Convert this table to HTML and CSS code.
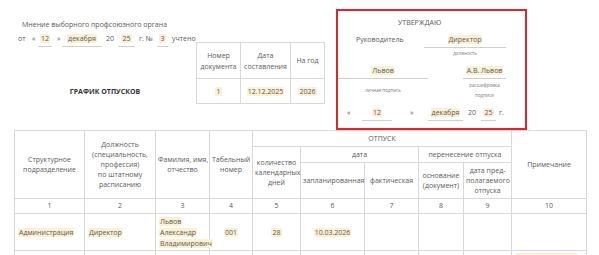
FILE: index.html
```html
<!DOCTYPE html>
<html lang="ru">
<head>
<meta charset="utf-8">
<title>График отпусков</title>
<link rel="stylesheet" href="styles.css">
</head>
<body>
<div class="page">
  <header class="head">
    <div class="head-left">
      <div class="col-main">
        <div class="opinion">
          <div class="opinion-title">Мнение выборного профсоюзного органа</div>
          <div class="date-line">
            <span class="t-ot">от</span>
            <span class="t-lq">«</span>
            <span class="field f-day"><mark>12</mark></span>
            <span class="t-rq">»</span>
            <span class="field f-month"><mark>декабря</mark></span>
            <span class="t-20">20</span>
            <span class="field f-year"><mark>25</mark></span>
            <span class="t-no">г. №</span>
            <span class="field f-num"><mark>3</mark></span>
            <span class="t-done">учтено</span>
          </div>
        </div>
        <div class="doc-title">ГРАФИК ОТПУСКОВ</div>
      </div>
      <table class="doc-table">
        <colgroup><col class="dc1"><col class="dc2"><col class="dc3"></colgroup>
        <tr class="dt-head"><td>Номер<br>документа</td><td>Дата<br>составления</td><td>На год</td></tr>
        <tr class="dt-val"><td><mark>1</mark></td><td><mark>12.12.2025</mark></td><td><mark>2026</mark></td></tr>
      </table>
    </div>
    <div class="approve">
      <div class="approve-title">УТВЕРЖДАЮ</div>
      <div class="ap-row ap-row-b">
        <span class="ap-label">Руководитель</span>
        <span class="field ap-pos"><mark>Директор</mark></span>
      </div>
      <div class="ap-cap-b"><span class="cap ap-pos-cap">должность</span></div>
      <div class="ap-row ap-row-c">
        <span class="field ap-sign"><mark>Львов</mark></span>
        <span class="field ap-name"><mark>А.В. Львов</mark></span>
      </div>
      <div class="ap-cap-c">
        <span class="cap ap-sign-cap">личная подпись</span>
        <span class="cap ap-name-cap">расшифровка<br>подписи</span>
      </div>
      <div class="ap-row ap-date">
        <span class="d-lq">«</span>
        <span class="field d-day"><mark>12</mark></span>
        <span class="d-rq">»</span>
        <span class="field d-month"><mark>декабря</mark></span>
        <span class="d-20">20</span>
        <span class="field d-year"><mark>25</mark></span>
        <span class="d-g">г.</span>
      </div>
    </div>
  </header>

  <table class="schedule">
    <colgroup>
      <col class="c1"><col class="c2"><col class="c3"><col class="c4"><col class="c5">
      <col class="c6"><col class="c7"><col class="c8"><col class="c9"><col class="c10">
    </colgroup>
    <tr class="r1">
      <th rowspan="3">Структурное<br>подразделение</th>
      <th rowspan="3">Должность<br>(специальность,<br>профессия)<br>по штатному<br>расписанию</th>
      <th rowspan="3">Фамилия, имя,<br>отчество</th>
      <th rowspan="3">Табельный<br>номер</th>
      <th colspan="5">ОТПУСК</th>
      <th rowspan="3">Примечание</th>
    </tr>
    <tr class="r2">
      <th rowspan="2">количество<br>календарных<br>дней</th>
      <th colspan="2">дата</th>
      <th colspan="2">перенесение отпуска</th>
    </tr>
    <tr class="r3">
      <th>запланированная</th>
      <th>фактическая</th>
      <th>основание<br>(документ)</th>
      <th>дата пред-<br>полагаемого<br>отпуска</th>
    </tr>
    <tr class="r-num">
      <td>1</td><td>2</td><td>3</td><td>4</td><td>5</td><td>6</td><td>7</td><td>8</td><td>9</td><td>10</td>
    </tr>
    <tr class="r-data">
      <td class="left"><mark>Администрация</mark></td>
      <td class="left"><mark>Директор</mark></td>
      <td class="left"><mark>Львов</mark><br><mark>Александр</mark><br><mark>Владимирович</mark></td>
      <td><mark>001</mark></td>
      <td><mark>28</mark></td>
      <td><mark>10.03.2026</mark></td>
      <td></td><td></td><td></td><td></td>
    </tr>
    <tr class="r-next">
      <td></td><td></td><td></td><td></td><td></td><td></td><td></td><td></td><td></td>
      <td class="top"><span class="hl-block"></span></td>
    </tr>
  </table>
</div>
</body>
</html>
```

FILE: styles.css
```css
* { box-sizing: border-box; }
body {
  margin: 0;
  background: #fff;
  font-family: "Open Sans", "Liberation Sans", sans-serif;
  font-size: 7px;
  color: #5a5a5a;
}
mark {
  background: #fcf0d2;
  color: inherit;
  padding: 0 1px;
  border-radius: 2px;
}
.page { padding: 9px 13px 0 14px; }

/* header */
.head { display: flex; height: 121px; }
.head-left { display: flex; width: 316px; }
.col-main { width: 182px; }
.opinion-title { padding: 11px 0 0 8px; line-height: 10px; white-space: nowrap; }
.date-line { display: flex; margin-top: 2px; line-height: 14px; white-space: nowrap; }
.field { border-bottom: 1px solid #cfcfcf; text-align: center; display: block; }
.t-ot { width: 18px; padding-left: 4px; }
.t-lq { width: 6px; }
.f-day { width: 14px; }
.t-rq { width: 10px; padding-left: 5px; }
.f-month { width: 40px; }
.t-20 { width: 16px; text-align: center; }
.f-year { width: 17px; }
.t-no { width: 22px; text-align: center; }
.f-num { width: 11px; }
.t-done { padding-left: 4px; }
.doc-title {
  margin-top: 40px;
  text-align: center;
  font-weight: bold;
  color: #333;
  line-height: 10px;
}

.doc-table {
  margin-top: 33px;
  width: 128px;
  border-collapse: collapse;
  table-layout: fixed;
  align-self: flex-start;
}
.dc1 { width: 44px; }
.dc2 { width: 50px; }
.dc3 { width: 34px; }
.doc-table td {
  border: 1px solid #d8d8d8;
  text-align: center;
  vertical-align: middle;
  line-height: 11px;
  padding: 0;
  white-space: nowrap;
}
.dt-head { height: 36px; }
.dt-val { height: 25px; }

/* approve box */
.approve {
  width: 191px;
  height: 121px;
  margin-left: 6px;
  border: 2px solid #e3222a;
}
.approve-title { margin-top: 7px; padding-left: 60px; line-height: 10px; }
.ap-row { display: flex; line-height: 14px; white-space: nowrap; }
.ap-row-b { margin-top: 5px; }
.ap-label { width: 86px; padding-left: 18px; }
.ap-pos { width: 82px; }
.cap { font-size: 4.5px; text-align: center; color: #777; display: block; }
.ap-cap-b { margin-top: 2px; padding-left: 86px; line-height: 6px; }
.ap-pos-cap { width: 82px; }
.ap-row-c { margin-top: 8px; }
.ap-sign { width: 90px; }
.ap-name { width: 43px; margin-left: 35px; }
.ap-cap-c { display: flex; align-items: center; height: 20px; margin-top: 1px; line-height: 10px; }
.ap-sign-cap { width: 90px; }
.ap-name-cap { width: 43px; margin-left: 35px; }
.ap-date { margin-top: 6px; }
.d-lq { width: 24px; padding-left: 9px; }
.d-day { width: 30px; }
.d-rq { width: 36px; padding-left: 18px; }
.d-month { width: 35px; }
.d-20 { width: 18px; text-align: center; }
.d-year { width: 15px; }
.d-g { padding-left: 3px; }

/* main table */
.schedule {
  border-collapse: collapse;
  table-layout: fixed;
  width: 572px;
}
.c1 { width: 70px; }
.c2 { width: 71px; }
.c3 { width: 54px; }
.c4 { width: 43px; }
.c5 { width: 48px; }
.c6 { width: 64px; }
.c7 { width: 54px; }
.c8 { width: 45px; }
.c9 { width: 48px; }
.c10 { width: 75px; }
.schedule th, .schedule td {
  border: 1px solid #d8d8d8;
  font-weight: normal;
  text-align: center;
  vertical-align: middle;
  line-height: 10px;
  padding: 0 2px;
  white-space: nowrap;
}
.schedule td.left { text-align: left; padding-left: 3px; }
.schedule td.top { vertical-align: top; padding: 2px 4px; }
.r1 { height: 16px; }
.r2 { height: 16px; }
.r3 { height: 36px; }
.r-num { height: 15px; }
.r-data { height: 37px; }
.r-data td { line-height: 11px; }
.r-next { height: 30px; }
.hl-block { display: block; width: 62px; height: 10px; background: #fcf0d2; border-radius: 2px; }
```
